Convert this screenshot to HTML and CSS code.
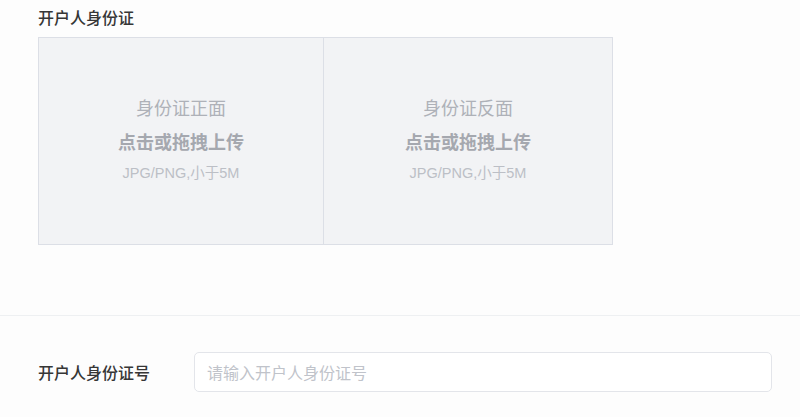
FILE: index.html
```html
<!DOCTYPE html>
<html lang="zh-CN">
<head>
<meta charset="utf-8">
<title>开户人身份证</title>
<link rel="stylesheet" href="styles.css">
</head>
<body>
<section class="id-section">
  <div class="section-title">开户人身份证</div>
  <div class="upload">
    <div class="panel panel-front">
      <div class="panel-name">身份证正面</div>
      <div class="panel-action">点击或拖拽上传</div>
      <div class="panel-hint">JPG/PNG,小于5M</div>
    </div>
    <div class="panel">
      <div class="panel-name">身份证反面</div>
      <div class="panel-action">点击或拖拽上传</div>
      <div class="panel-hint">JPG/PNG,小于5M</div>
    </div>
  </div>
</section>
<section class="form-row">
  <label class="row-label">开户人身份证号</label>
  <div class="input">请输入开户人身份证号</div>
</section>
</body>
</html>
```

FILE: styles.css
```css
html, body {
  margin: 0;
  padding: 0;
  background: #fdfdfd;
  font-family: "Noto Sans CJK SC", "Noto Sans", sans-serif;
}

.id-section {
  padding: 6px 38px 70px;
  border-bottom: 1px solid #eef0f2;
}

.section-title {
  font-size: 16px;
  line-height: 22px;
  font-weight: 500;
  color: #363636;
  margin-bottom: 9px;
}

.upload {
  box-sizing: border-box;
  width: 575px;
  height: 208px;
  display: grid;
  grid-template-columns: 285px 1fr;
  border: 1px solid #dcdfe6;
  background: #f2f3f5;
}

.panel {
  padding-top: 56px;
  text-align: center;
}

.panel-front {
  border-right: 1px solid #dcdfe6;
}

.panel-name {
  font-size: 18px;
  line-height: 26px;
  color: #aeb1b8;
}

.panel-action {
  margin-top: 8px;
  font-size: 18px;
  line-height: 26px;
  font-weight: 700;
  color: #a5a8af;
}

.panel-hint {
  margin-top: 9px;
  font-family: "Liberation Sans", "Noto Sans CJK SC", sans-serif;
  font-size: 14.5px;
  line-height: 20px;
  color: #bcbfc6;
}

.form-row {
  display: flex;
  align-items: center;
  padding: 36px 28px 0 38px;
}

.row-label {
  width: 156px;
  flex: none;
  font-size: 16px;
  line-height: 22px;
  font-weight: 500;
  color: #363636;
}

.input {
  box-sizing: border-box;
  flex: 1;
  height: 40px;
  padding: 0 12px;
  border: 1px solid #e3e5ea;
  border-radius: 5px;
  background: #ffffff;
  font-size: 16px;
  line-height: 38px;
  color: #c0c3ca;
}
```
